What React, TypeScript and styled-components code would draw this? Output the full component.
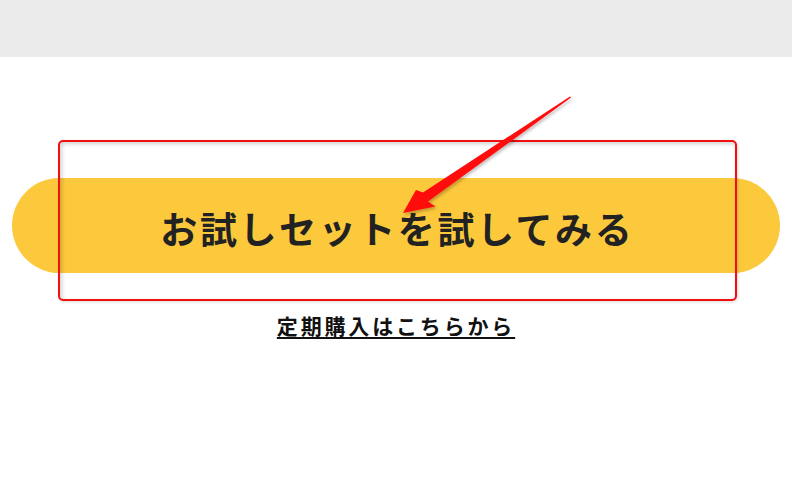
import React from "react";
import styled, { createGlobalStyle } from "styled-components";

const GlobalStyle = createGlobalStyle`
  html, body {
    margin: 0;
    padding: 0;
    background: #ffffff;
  }
  body {
    font-family: "Noto Sans CJK JP", "Noto Sans", sans-serif;
    color: #222222;
  }
`;

const Page = styled.div`
  position: relative;
  width: 792px;
  height: 486px;
  overflow: hidden;
  background: #ffffff;
`;

const TopBand = styled.div`
  height: 57px;
  background: #ebebeb;
`;

const Content = styled.main`
  display: flex;
  flex-direction: column;
  align-items: center;
  padding: 121px 12px 0;
`;

const CtaButton = styled.a`
  display: flex;
  align-items: center;
  justify-content: center;
  width: 100%;
  height: 95px;
  border-radius: 48px;
  background: #fcc93d;
  color: #222222;
  font-size: 37px;
  font-weight: 700;
  letter-spacing: 0.07em;
  text-decoration: none;
  padding-left: 0.07em;
  padding-top: 5px;
  box-sizing: border-box;
`;

const SubLink = styled.a`
  margin-top: 40px;
  color: #111111;
  font-size: 21px;
  font-weight: 700;
  letter-spacing: 0.135em;
  line-height: 1.2;
  text-decoration: underline;
  text-decoration-thickness: 2px;
  text-underline-offset: 3px;
`;

const Highlight = styled.div`
  position: absolute;
  left: 58px;
  top: 140px;
  width: 679px;
  height: 161px;
  box-sizing: border-box;
  border: 2px solid #f01010;
  border-radius: 5px;
  box-shadow: inset 2px 2px 4px rgba(0, 0, 0, 0.18), 1px 1px 3px rgba(0, 0, 0, 0.15);
  pointer-events: none;
`;

const ArrowLayer = styled.svg`
  position: absolute;
  left: 0;
  top: 0;
  pointer-events: none;
`;

function Arrow() {
  return (
    <ArrowLayer width={792} height={486} viewBox="0 0 792 486">
      <defs>
        <filter id="arrowShadow" x="-20%" y="-20%" width="140%" height="140%">
          <feDropShadow dx="1.5" dy="2" stdDeviation="1.5" floodColor="#000" floodOpacity="0.25" />
        </filter>
      </defs>
      <polygon
        points="571,97.6 570,96.4 423,192.5 416,190 403,213 435.5,206.5 428,201.5"
        fill="#ff0a0a"
        filter="url(#arrowShadow)"
      />
    </ArrowLayer>
  );
}

export default function App() {
  return (
    <>
      <GlobalStyle />
      <Page>
        <TopBand />
        <Content>
          <CtaButton href="#">お試しセットを試してみる</CtaButton>
          <SubLink href="#">定期購入はこちらから</SubLink>
        </Content>
        <Highlight />
        <Arrow />
      </Page>
    </>
  );
}
